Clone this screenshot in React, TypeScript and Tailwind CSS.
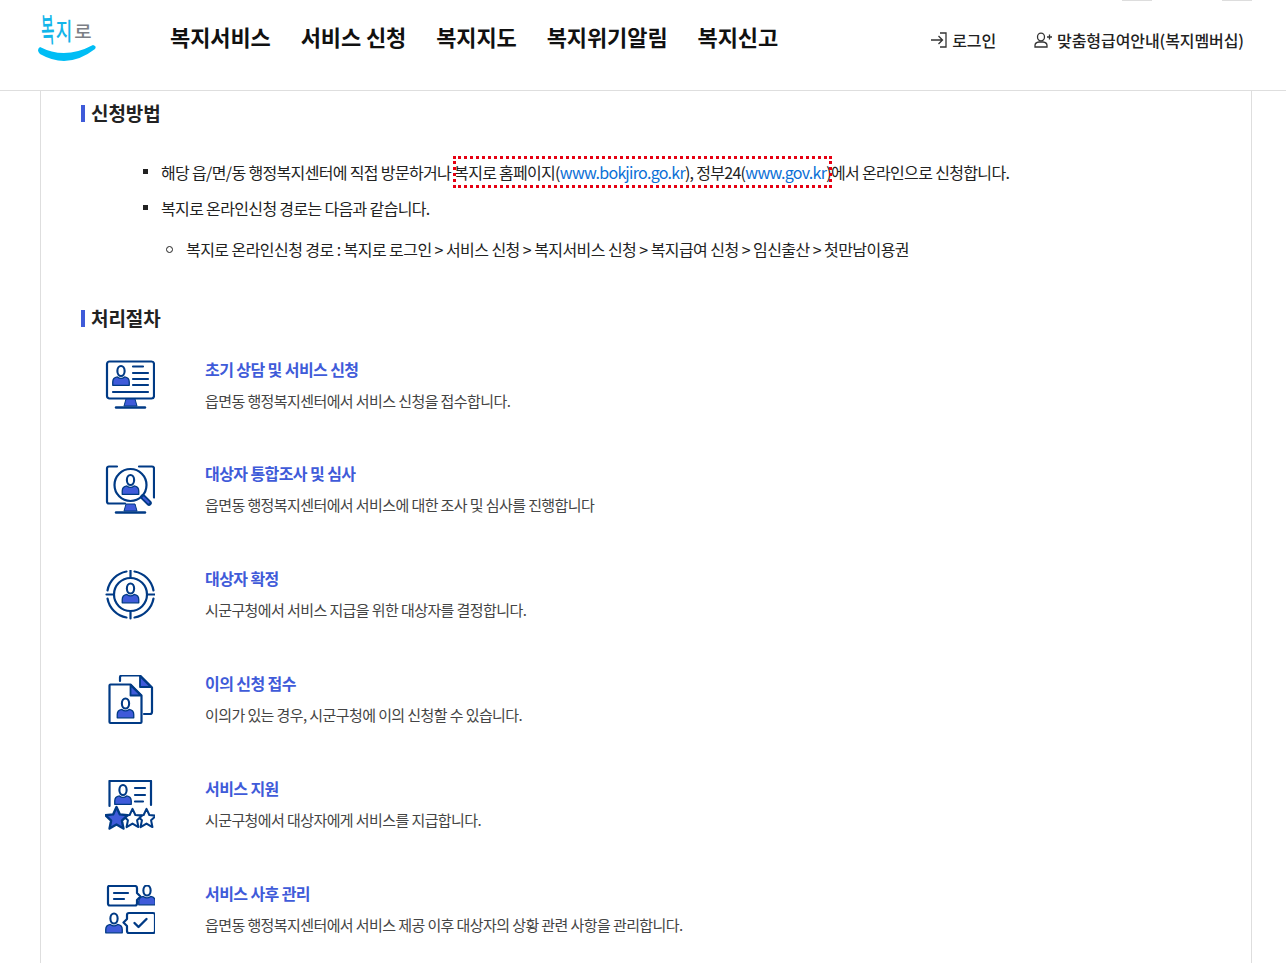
const NAVY = "#003a85";
const BLUE = "#3f5bd9";

const NAV_ITEMS = ["복지서비스", "서비스 신청", "복지지도", "복지위기알림", "복지신고"];

function Person({ x, y, s = 1.1 }: { x: number; y: number; s?: number }) {
  // little bust used in every step icon, x/y is top centre of the head
  return (
    <g transform={`translate(${x} ${y}) scale(${s})`}>
      <ellipse cx="0" cy="5" rx="3.3" ry="4.6" fill="white" stroke={NAVY} strokeWidth="1.9" />
      <path d="M-7.500 18 v-3 q0-4 4.200-4.600 q3.300 2.600 6.600 0 q4.200 .6 4.200 4.600 v3 z" fill={BLUE} stroke={NAVY} strokeWidth="1.200" strokeLinejoin="round" />
    </g>
  );
}

function Star({ x, y, s, filled }: { x: number; y: number; s: number; filled?: boolean }) {
  return (
    <path
      transform={`translate(${x} ${y}) scale(${s})`}
      d="M0-9.500 L2.800-3.400 L9.200-2.700 L4.500 1.800 L5.800 8.400 L0 5 L-5.800 8.400 L-4.500 1.800 L-9.200-2.700 L-2.800-3.400 Z"
      fill={filled ? BLUE : "white"}
      stroke={NAVY}
      strokeWidth={2}
      strokeLinejoin="round"
    />
  );
}

function MonitorBase() {
  return (
    <>
      <path d="M21 39 h9 l2 7 h-13 z" fill={BLUE} stroke={NAVY} strokeWidth="1" />
      <path d="M11 47.500 h29" stroke={NAVY} strokeWidth="2.400" strokeLinecap="round" />
    </>
  );
}

function StepIcon({ kind }: { kind: number }) {
  const line = { stroke: NAVY, strokeWidth: 2.2, fill: "none", strokeLinecap: "round" as const, strokeLinejoin: "round" as const };
  return (
    <svg width="50" height="50" viewBox="0 0 50 50" className="shrink-0">
      {kind === 0 && (
        <>
          <rect x="2" y="1.500" width="47" height="37" rx="2.500" {...line} />
          <Person x={16} y={5.500} />
          <path d="M28 6.500 h10 M28 13 h15 M28 19 h15 M28 25 h15 M8 32 h35" {...line} />
          <MonitorBase />
        </>
      )}
      {kind === 1 && (
        <>
          <path d="M12 1.500 h-8 a2 2 0 0 0-2 2 v33 a2 2 0 0 0 2 2 h16 M34 1.500 h13 a2 2 0 0 1 2 2 v29" {...line} />
          <circle cx="25.500" cy="20" r="16" fill="white" stroke={NAVY} strokeWidth="2.200" />
          <Person x={25.500} y={9.500} />
          <path d="M38 32 l6 6" stroke={NAVY} strokeWidth="5.500" strokeLinecap="round" />
          <path d="M38.500 32.500 l5 5" stroke={BLUE} strokeWidth="2" strokeLinecap="round" />
          <MonitorBase />
        </>
      )}
      {kind === 2 && (
        <>
          <circle cx="25.500" cy="24.500" r="16.500" {...line} />
          <path d="M21.500 1.500 A23.500 23.500 0 0 0 2.500 20.500 M29.500 1.500 A23.500 23.500 0 0 1 48.500 20.500 M21.500 47.500 A23.500 23.500 0 0 1 2.500 28.500 M29.500 47.500 A23.500 23.500 0 0 0 48.500 28.500" {...line} />
          <path d="M25.500 0.500 v7 M25.500 41.500 v7 M1.500 24.500 h7 M42.500 24.500 h7" {...line} />
          <Person x={25.500} y={13} />
        </>
      )}
      {kind === 3 && (
        <>
          <path d="M15 6 v-3.500 a2 2 0 0 1 2-2 h18 l12 12 v24.500 a2 2 0 0 1-2 2 h-6" {...line} />
          <path d="M35 1 v11 h11 z" fill={BLUE} stroke={NAVY} strokeWidth="1.800" strokeLinejoin="round" />
          <path d="M5.500 9.500 h20 l11 11 v26.500 a1 1 0 0 1-1 1 h-30 a1 1 0 0 1-1-1 v-36.500 a1 1 0 0 1 1-1 z" fill="white" stroke={NAVY} strokeWidth="2.200" strokeLinejoin="round" />
          <path d="M25.500 10 v10.500 h10.500 z" fill={BLUE} stroke={NAVY} strokeWidth="1.800" strokeLinejoin="round" />
          <Person x={20.500} y={23} />
        </>
      )}
      {kind === 4 && (
        <>
          <path d="M4.500 26 v-25 h41.500 v24" {...line} />
          <Person x={18} y={4.500} />
          <path d="M30 8 h10 M30 15 h10 M30 21.500 h8" {...line} />
          <Star x={41.500} y={38.500} s={1.02} />
          <Star x={27.500} y={38.500} s={1.02} />
          <Star x={11.500} y={38.500} s={1.2} filled />
        </>
      )}
      {kind === 5 && (
        <>
          <path d="M5 1 h25 a2 2 0 0 1 2 2 v5 l3.500 3.500 l-3.500 3.500 v3.500 a2 2 0 0 1-2 2 h-25 a2 2 0 0 1-2-2 v-16 a2 2 0 0 1 2-2 z" {...line} />
          <path d="M9 8 h14 M9 14 h10" {...line} />
          <Person x={42} y={0} s={1.1} />
          <path d="M24 28 h24 a2 2 0 0 1 2 2 v16 a2 2 0 0 1-2 2 h-24 a2 2 0 0 1-2-2 v-5 l-3.500-3.500 l3.500-3.500 v-4 a2 2 0 0 1 2-2 z" {...line} />
          <path d="M29.500 38 l4 4 l8-8" {...line} strokeWidth={2.400} />
          <Person x={9} y={28} s={1.1} />
        </>
      )}
    </svg>
  );
}

const STEPS = [
  { title: "초기 상담 및 서비스 신청", desc: "읍면동 행정복지센터에서 서비스 신청을 접수합니다." },
  { title: "대상자 통합조사 및 심사", desc: "읍면동 행정복지센터에서 서비스에 대한 조사 및 심사를 진행합니다" },
  { title: "대상자 확정", desc: "시군구청에서 서비스 지급을 위한 대상자를 결정합니다." },
  { title: "이의 신청 접수", desc: "이의가 있는 경우, 시군구청에 이의 신청할 수 있습니다." },
  { title: "서비스 지원", desc: "시군구청에서 대상자에게 서비스를 지급합니다." },
  { title: "서비스 사후 관리", desc: "읍면동 행정복지센터에서 서비스 제공 이후 대상자의 상황 관련 사항을 관리합니다." },
];

function SectionTitle({ children }: { children: string }) {
  return (
    <h3 className="flex items-center gap-[6px] text-[19px] leading-[24px] font-bold tracking-[-0.005em] text-[#222]">
      <span className="h-[17px] w-[4px] bg-[#3f5bd9]" />
      {children}
    </h3>
  );
}

export default function App() {
  return (
    <div className="flex h-[963px] flex-col overflow-hidden bg-white font-['Noto_Sans_CJK_KR','Noto_Sans',sans-serif] text-[#222]">
      <header className="relative flex h-[91px] shrink-0 items-start border-b border-[#dedede]">
        <span className="absolute top-0 left-[1122px] h-[1px] w-[30px] bg-[#ddd]" />
        <span className="absolute top-0 left-[1222px] h-[1px] w-[30px] bg-[#ddd]" />
        <svg width="70" height="62" viewBox="0 0 70 62" className="mt-[5px] ml-[32px] shrink-0 overflow-visible">
          <text transform="translate(16.500 37) rotate(-3) scale(0.85 1.95)" textAnchor="middle" fontSize="17" fontWeight="500" fill="#12b5ea">복</text>
          <text transform="translate(32 35) scale(0.95 1.25)" textAnchor="middle" fontSize="19" fontWeight="500" fill="#12b5ea">지</text>
          <text transform="translate(51 33) scale(1.05 0.95)" textAnchor="middle" fontSize="18" fontWeight="500" fill="#7c7f86">로</text>
          <path d="M8 42 Q33 55 61 40 Q65 41 63 44 Q36 65 8 49 Q4 45 8 42 Z" fill="#00bdf5" />
        </svg>
        <nav className="mt-[20px] ml-[68px] flex gap-[30px]">
          {NAV_ITEMS.map((item) => (
            <a key={item} className="text-[22px] leading-[32px] font-bold tracking-[-0.005em] whitespace-nowrap text-[#111]">
              {item}
            </a>
          ))}
        </nav>
        <div className="absolute top-[28px] right-[42px] flex items-center gap-[38px] text-[16px] leading-[24px] font-medium tracking-[-0.005em] text-[#222]">
          <a className="flex items-center gap-[5px]">
            <svg width="16" height="16" viewBox="0 0 16 16" fill="none" stroke="#333" strokeWidth="1.300">
              <path d="M0 8 h11 M7.500 4 l4 4 l-4 4 M9 1 h6 v14 h-6" />
            </svg>
            로그인
          </a>
          <a className="flex items-center gap-[5px]">
            <svg width="18" height="16" viewBox="0 0 18 16" fill="none" stroke="#333" strokeWidth="1.300">
              <ellipse cx="7" cy="5" rx="3.500" ry="3.800" />
              <path d="M1 15 v-1.500 q0-3 4-3.500 h4 q4 .5 4 3.500 v1.500 z M13 5 h5 M15.500 2.500 v5" />
            </svg>
            맞춤형급여안내(복지멤버십)
          </a>
        </div>
      </header>

      <main className="ml-[40px] w-[1212px] flex-1 border-x border-[#dedede] pt-[10px] pl-[40px]">
        <SectionTitle>신청방법</SectionTitle>
        <ul className="mt-[29px] ml-[80px] list-none text-[16px] leading-[36px] tracking-[-0.041em] text-[#222]">
          <li className="relative whitespace-nowrap">
            <span className="absolute top-[15px] left-[-18px] h-[5px] w-[5px] bg-[#222]" />
            해당 읍/면/동 행정복지센터에 직접 방문하거나{" "}
            <span className="py-[3px] tracking-[-0.044em] outline-[3px] -outline-offset-2 outline-[#e60012] outline-dotted">
              복지로 홈페이지(<a className="text-[#0b6fd6]">www.bokjiro.go.kr</a>), 정부24(<a className="text-[#0b6fd6]">www.gov.kr</a>)
            </span>
            에서 온라인으로 신청합니다.
          </li>
          <li className="relative whitespace-nowrap">
            <span className="absolute top-[15px] left-[-18px] h-[5px] w-[5px] bg-[#222]" />
            복지로 온라인신청 경로는 다음과 같습니다.
          </li>
          <li className="relative mt-[5px] ml-[25px] whitespace-nowrap tracking-[-0.035em]">
            <span className="absolute top-[15px] left-[-20px] h-[7px] w-[7px] rounded-full border border-[#222]" />
            복지로 온라인신청 경로 : 복지로 로그인 &gt; 서비스 신청 &gt; 복지서비스 신청 &gt; 복지급여 신청 &gt; 임신출산 &gt; 첫만남이용권
          </li>
        </ul>

        <div className="mt-[39px]">
          <SectionTitle>처리절차</SectionTitle>
        </div>
        <ol className="mt-[30px] flex flex-col gap-[55px] pl-[24px]">
          {STEPS.map((step, i) => (
            <li key={step.title} className="flex h-[50px] items-start gap-[50px]">
              <StepIcon kind={i} />
              <div className={i === 0 ? "-mt-[3px] tracking-[-0.037em]" : "-mt-[4px] tracking-[-0.037em]"}>
                <p className="text-[16px] leading-[24px] font-bold text-[#3f5bd9]">{step.title}</p>
                <p className="mt-[8px] text-[15px] leading-[24px] text-[#444]">{step.desc}</p>
              </div>
            </li>
          ))}
        </ol>
      </main>
    </div>
  );
}
